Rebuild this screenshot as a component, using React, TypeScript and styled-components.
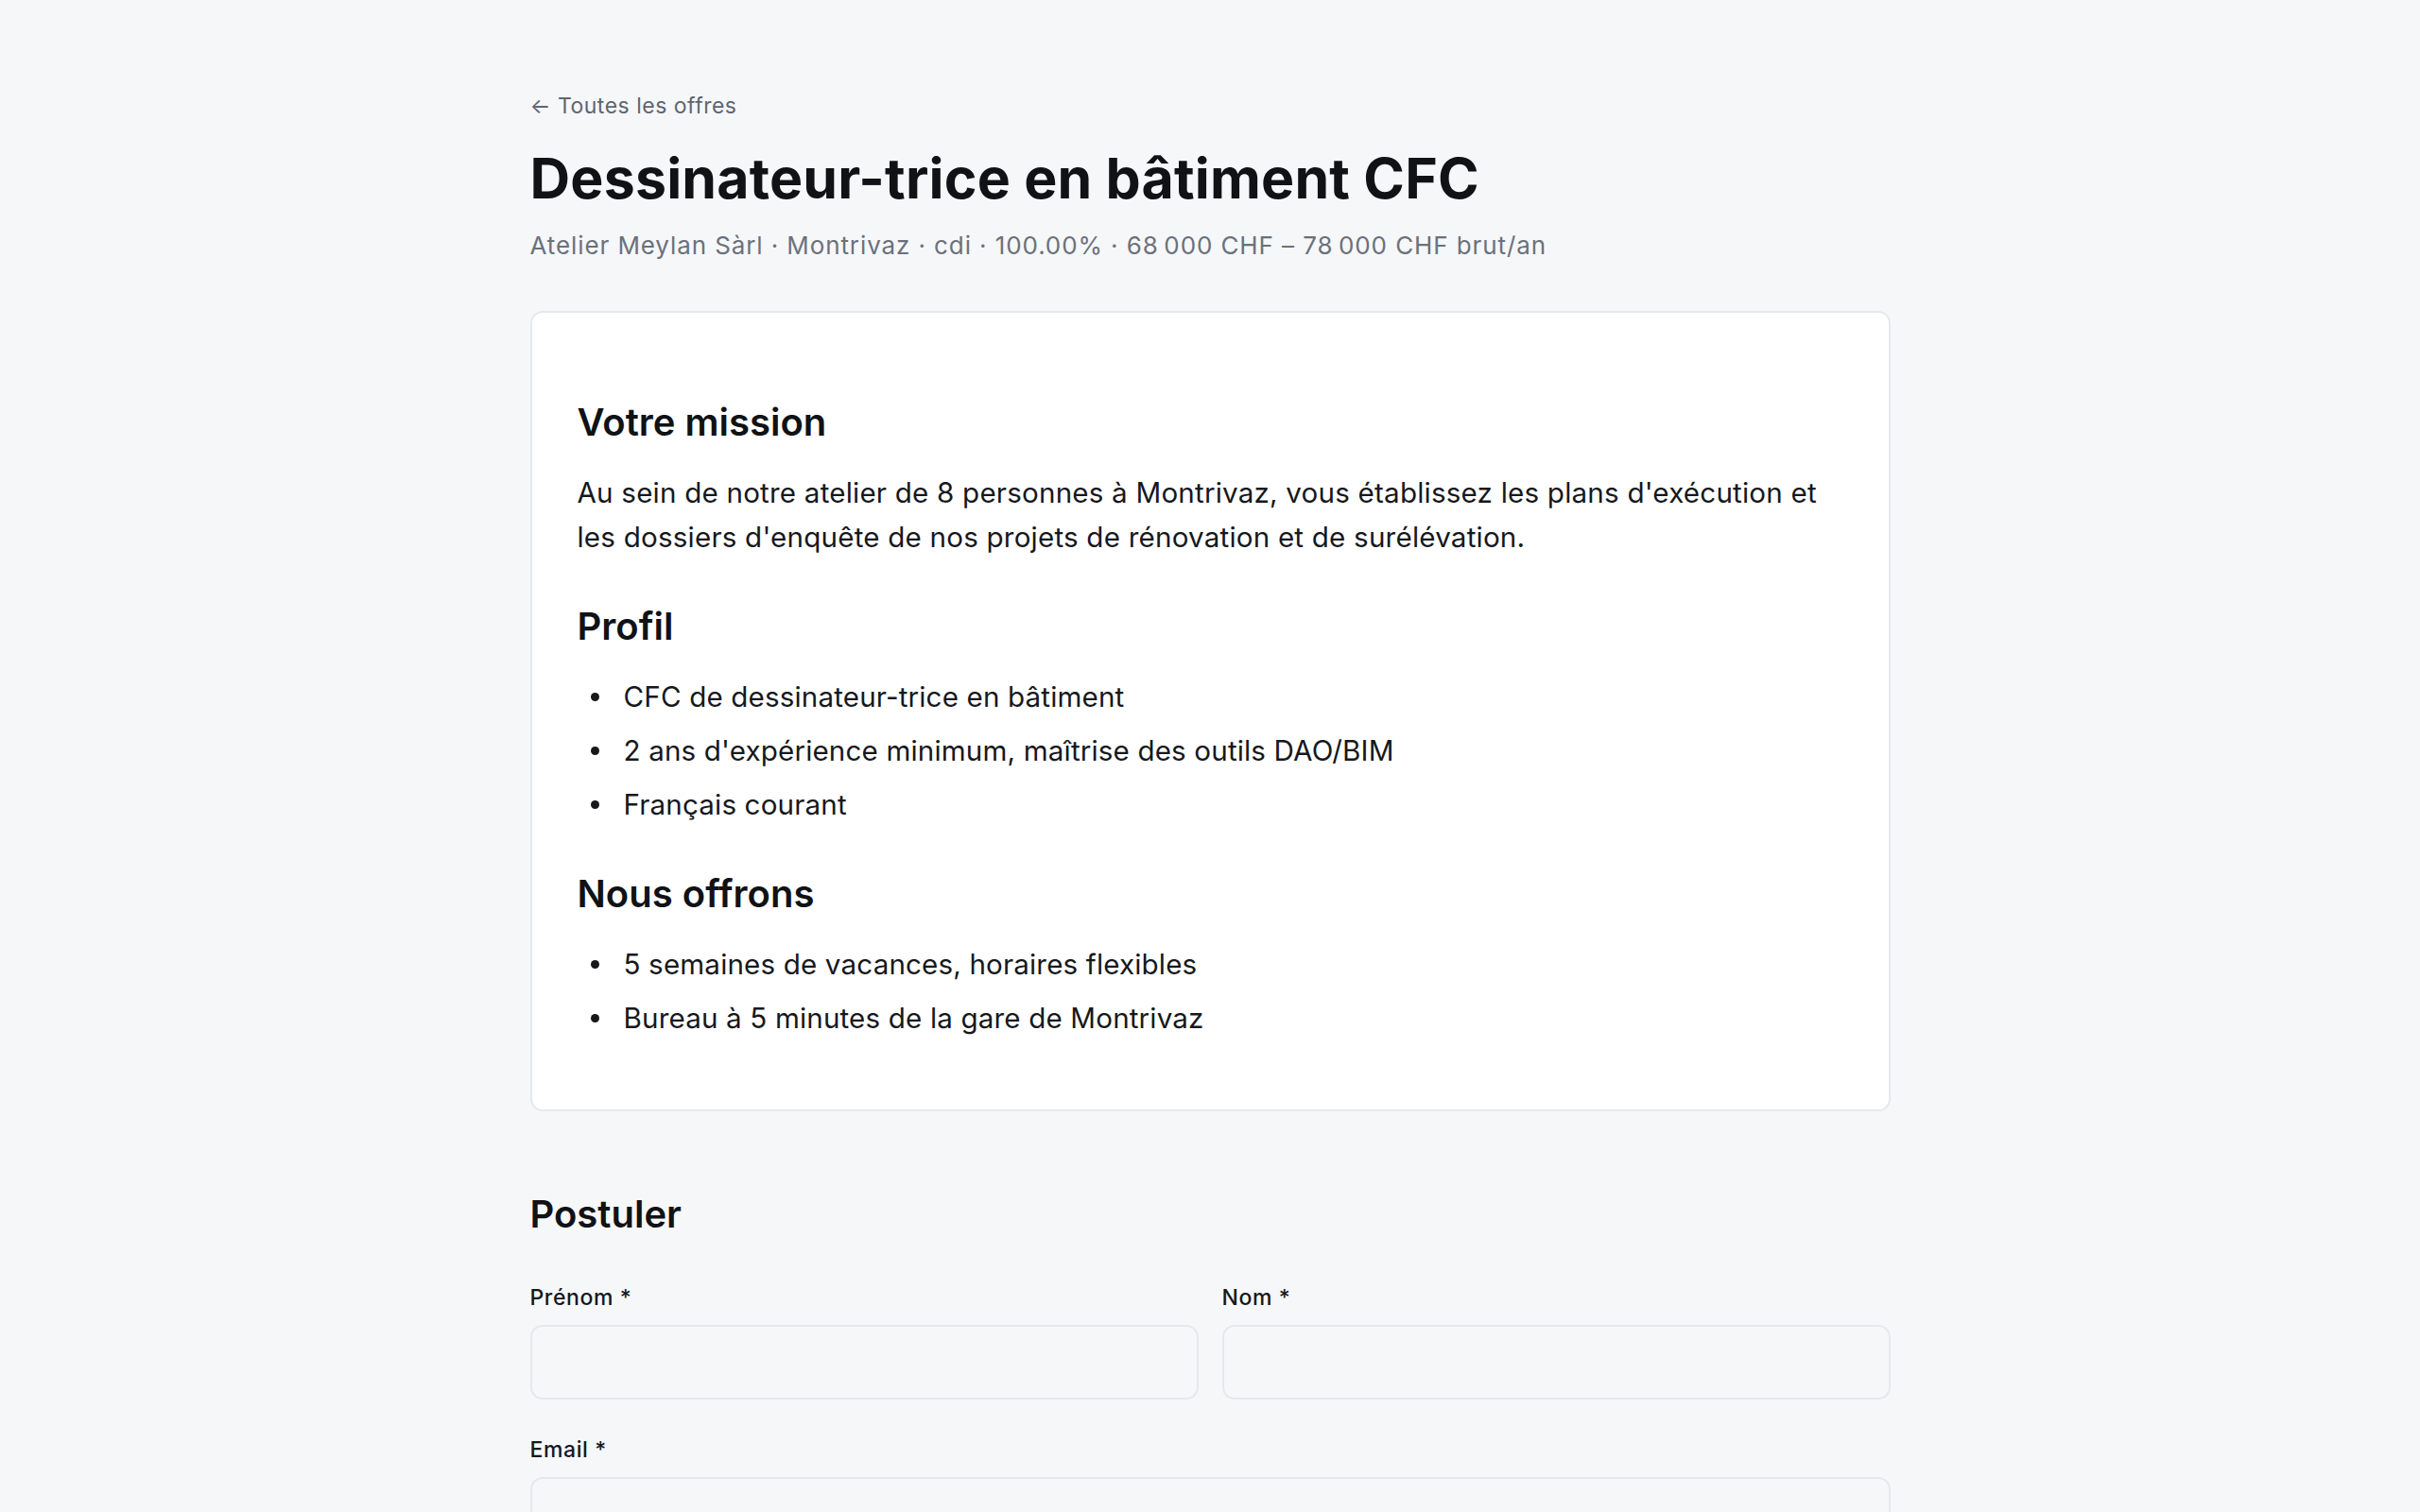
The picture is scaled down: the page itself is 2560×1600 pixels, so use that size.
import React from 'react';
import styled, { createGlobalStyle } from 'styled-components';

const GlobalStyle = createGlobalStyle`
  * {
    box-sizing: border-box;
  }

  html,
  body {
    margin: 0;
    background: #f6f7f9;
  }

  body {
    font-family: Inter, 'Noto Sans', 'Liberation Sans', sans-serif;
    color: #16181c;
    -webkit-font-smoothing: antialiased;
  }
`;

const Page = styled.main`
  min-height: 100vh;
  padding: 95px 0 160px;
`;

const Container = styled.div`
  max-width: 1439px;
  margin: 0 auto;
`;

const BackLink = styled.a`
  display: inline-block;
  font-size: 23px;
  line-height: 34px;
  letter-spacing: 0.5px;
  color: #5f656f;
  text-decoration: none;
`;

const Title = styled.h1`
  margin: 24px 0 0;
  font-size: 59px;
  line-height: 71px;
  font-weight: 700;
  letter-spacing: 0.2px;
  color: #101216;
`;

const Meta = styled.p`
  margin: 16px 0 0;
  font-size: 26px;
  line-height: 39px;
  letter-spacing: 0.9px;
  color: #6b717b;
`;

const Card = styled.section`
  margin-top: 50px;
  padding: 45px 48px 48px;
  background: #ffffff;
  border: 2px solid #e6e8ec;
  border-radius: 13px;
`;

const SectionTitle = styled.h2`
  margin: 44px 0 25px;
  font-size: 40px;
  line-height: 53px;
  font-weight: 600;
  color: #101216;
`;

const Paragraph = styled.p`
  margin: 0 0 26px;
  font-size: 29.6px;
  line-height: 47px;
  letter-spacing: 0.2px;
`;

const List = styled.ul`
  margin: 0 0 25px;
  padding-left: 14px;
  list-style: none;
`;

const Item = styled.li`
  display: flex;
  align-items: center;
  font-size: 29.6px;
  line-height: 47px;
  letter-spacing: 0.15px;

  &::before {
    content: '';
    flex: 0 0 9px;
    height: 9px;
    margin-right: 26px;
    border-radius: 50%;
    background: currentColor;
  }

  & + & {
    margin-top: 10px;
  }
`;

const Apply = styled.section`
  margin-top: 83px;
`;

const ApplyTitle = styled.h2`
  margin: 0 0 45px;
  font-size: 40px;
  line-height: 52px;
  font-weight: 600;
  color: #101216;
`;

const FieldRow = styled.div<{ $columns?: number }>`
  display: grid;
  grid-template-columns: repeat(${(p) => p.$columns ?? 1}, 1fr);
  gap: 25px;
  margin-bottom: 36px;
`;

const Field = styled.div`
  display: flex;
  flex-direction: column;
`;

const Label = styled.label`
  margin-bottom: 12px;
  font-size: 23px;
  line-height: 34px;
  font-weight: 500;
  letter-spacing: 0.6px;
  color: #16181c;
`;

const Input = styled.input`
  width: 100%;
  height: 79px;
  padding: 0 20px;
  font: inherit;
  font-size: 26px;
  color: #16181c;
  background: #f6f7f9;
  border: 2px solid #e6e8ec;
  border-radius: 13px;
  outline: none;
`;

const App: React.FC = () => {
  return (
    <>
      <GlobalStyle />
      <Page>
        <Container>
          <BackLink href="#">← Toutes les offres</BackLink>
          <Title>Dessinateur-trice en bâtiment CFC</Title>
          <Meta>
            Atelier Meylan Sàrl · Montrivaz · cdi · 100.00% · 68{'\u202f'}000 CHF – 78{'\u202f'}000 CHF brut/an
          </Meta>

          <Card>
            <SectionTitle>Votre mission</SectionTitle>
            <Paragraph>
              Au sein de notre atelier de 8 personnes à Montrivaz, vous établissez les plans d'exécution et
              les dossiers d'enquête de nos projets de rénovation et de surélévation.
            </Paragraph>

            <SectionTitle>Profil</SectionTitle>
            <List>
              <Item>CFC de dessinateur-trice en bâtiment</Item>
              <Item>2 ans d'expérience minimum, maîtrise des outils DAO/BIM</Item>
              <Item>Français courant</Item>
            </List>

            <SectionTitle>Nous offrons</SectionTitle>
            <List>
              <Item>5 semaines de vacances, horaires flexibles</Item>
              <Item>Bureau à 5 minutes de la gare de Montrivaz</Item>
            </List>
          </Card>

          <Apply>
            <ApplyTitle>Postuler</ApplyTitle>
            <FieldRow $columns={2}>
              <Field>
                <Label htmlFor="firstName">Prénom *</Label>
                <Input id="firstName" type="text" />
              </Field>
              <Field>
                <Label htmlFor="lastName">Nom *</Label>
                <Input id="lastName" type="text" />
              </Field>
            </FieldRow>
            <FieldRow>
              <Field>
                <Label htmlFor="email">Email *</Label>
                <Input id="email" type="email" />
              </Field>
            </FieldRow>
          </Apply>
        </Container>
      </Page>
    </>
  );
};

export default App;
